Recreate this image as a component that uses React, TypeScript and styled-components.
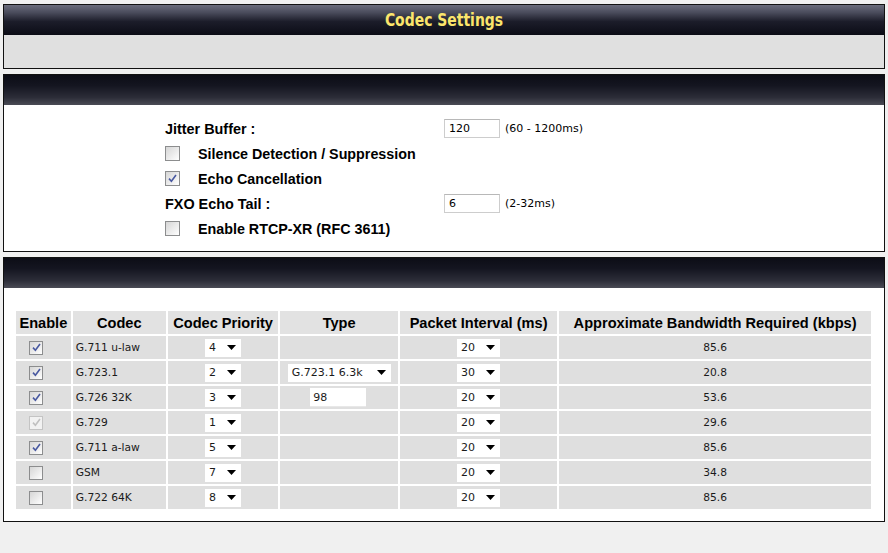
import React from 'react'
import styled, { createGlobalStyle } from 'styled-components'

const GlobalStyle = createGlobalStyle`
  html, body {
    margin: 0;
    padding: 0;
    background: #f0f0f0;
  }
  body {
    font-family: 'DejaVu Sans', Verdana, sans-serif;
    font-size: 11px;
    color: #000;
  }
`

const Page = styled.div`
  display: flex;
  flex-direction: column;
  gap: 5px;
  padding: 4px 3px 0 3px;
  width: 882px;
`

const Panel = styled.section`
  border: 1px solid #111;
  background: #fff;
  display: flex;
  flex-direction: column;
`

const TitleBar = styled.div<{ $flip?: boolean }>`
  height: 30px;
  display: flex;
  align-items: center;
  justify-content: center;
  background: ${(p) =>
    p.$flip
      ? 'linear-gradient(to bottom, #0c0d16 0%, #141520 35%, #2c2d38 75%, #4a4b55 100%)'
      : 'linear-gradient(to bottom, #6a6c7c 0%, #4a4c5c 25%, #1c1d2a 55%, #0b0c16 100%)'};
`

const Title = styled.h1`
  margin: 0;
  font-family: 'DejaVu Sans Condensed', 'Liberation Sans', sans-serif;
  font-weight: bold;
  font-size: 15.5px;
  color: #fbe56c;
  transform: scaleY(1.1);
`

const GrayBody = styled.div`
  height: 33px;
  background: #e0e0e0;
`

const FormBody = styled.div`
  display: grid;
  grid-template-columns: 279px auto;
  grid-auto-rows: 25px;
  padding: 11px 0 10px 161px;
`

const Label = styled.div`
  display: flex;
  align-items: center;
  font-family: 'Liberation Sans', Arial, sans-serif;
  font-weight: bold;
  font-size: 14.4px;
`

const CheckRow = styled.div`
  grid-column: 1 / span 2;
  display: flex;
  align-items: center;
  gap: 18px;
  font-family: 'Liberation Sans', Arial, sans-serif;
  font-weight: bold;
  font-size: 14.3px;
`

const FieldCell = styled.div`
  display: flex;
  align-items: center;
  gap: 5px;
`

const TextBox = styled.div<{ $w: number }>`
  width: ${(p) => p.$w}px;
  height: 19px;
  box-sizing: border-box;
  border: 1px solid #cdcdcd;
  border-top-color: #b8b8b8;
  background: #fff;
  padding-left: 4px;
  display: flex;
  align-items: center;
  font-size: 11px;
`

const Hint = styled.span`
  font-size: 11px;
`

const TableBody = styled.div`
  padding: 21px 11px 10px 10px;
`

const Grid = styled.table`
  border-collapse: separate;
  border-spacing: 2px;
  width: 859px;
  background: #fff;
`

const Th = styled.th<{ $w: number }>`
  width: ${(p) => p.$w}px;
  height: 23px;
  padding: 0;
  background: #e2e2e2;
  font-family: 'Liberation Sans', Arial, sans-serif;
  font-weight: bold;
  font-size: 14.6px;
  text-align: center;
  white-space: nowrap;
`

const Td = styled.td<{ $align?: string }>`
  height: 23px;
  padding: 0 3px;
  background: #dfdfdf;
  text-align: ${(p) => p.$align || 'center'};
  color: #1a1a1a;
  font-size: 10.7px;
  vertical-align: middle;
`

const CheckCell = styled.div`
  display: flex;
  align-items: center;
  padding-left: 10px;
`

const Box = styled.span<{ $size: number; $disabled?: boolean }>`
  width: ${(p) => p.$size}px;
  height: ${(p) => p.$size}px;
  box-sizing: border-box;
  border: 1px solid ${(p) => (p.$disabled ? '#c4c4c4' : '#8c8d8e')};
  background: ${(p) =>
    p.$disabled ? '#f2f2f2' : 'linear-gradient(135deg, #d6d6d6 0%, #ececec 55%, #ffffff 100%)'};
  display: inline-flex;
  align-items: center;
  justify-content: center;
  flex: none;
`

const DropBox = styled.span<{ $w: number }>`
  display: inline-flex;
  align-items: center;
  justify-content: space-between;
  width: ${(p) => p.$w}px;
  height: 18px;
  box-sizing: border-box;
  padding: 0 5px 0 4px;
  background: #fff;
  vertical-align: middle;
  font-size: 11px;
`

const TypeInput = styled.span`
  display: inline-flex;
  align-items: center;
  width: 56px;
  height: 19px;
  box-sizing: border-box;
  padding-left: 3px;
  margin-left: 27px;
  background: #fff;
  border-bottom: 1px solid #e8e8e8;
  vertical-align: middle;
  font-size: 11px;
`

const Check = ({ on, disabled, size = 14 }: { on: boolean; disabled?: boolean; size?: number }) => (
  <Box $size={size} $disabled={disabled}>
    {on && (
      <svg width="9" height="9" viewBox="0 0 9 9">
        <path
          d="M1 4.6 L3.4 7.2 L8 1"
          fill="none"
          stroke={disabled ? '#c0c0c0' : '#4858a0'}
          strokeWidth="1.6"
        />
      </svg>
    )}
  </Box>
)

const Dropdown = ({ value, w }: { value: string; w: number }) => (
  <DropBox $w={w}>
    <span>{value}</span>
    <svg width="9" height="5" viewBox="0 0 9 5">
      <path d="M0 0 H9 L4.5 5 Z" fill="#000" />
    </svg>
  </DropBox>
)

type Codec = {
  on: boolean
  disabled?: boolean
  name: string
  priority: string
  type?: 'select' | 'input'
  interval: string
  bw: string
}

const codecs: Codec[] = [
  { on: true, name: 'G.711 u-law', priority: '4', interval: '20', bw: '85.6' },
  { on: true, name: 'G.723.1', priority: '2', type: 'select', interval: '30', bw: '20.8' },
  { on: true, name: 'G.726 32K', priority: '3', type: 'input', interval: '20', bw: '53.6' },
  { on: true, disabled: true, name: 'G.729', priority: '1', interval: '20', bw: '29.6' },
  { on: true, name: 'G.711 a-law', priority: '5', interval: '20', bw: '85.6' },
  { on: false, name: 'GSM', priority: '7', interval: '20', bw: '34.8' },
  { on: false, name: 'G.722 64K', priority: '8', interval: '20', bw: '85.6' },
]

const App: React.FC = () => (
  <>
    <GlobalStyle />
    <Page>
      <Panel>
        <TitleBar>
          <Title>Codec Settings</Title>
        </TitleBar>
        <GrayBody />
      </Panel>

      <Panel>
        <TitleBar $flip />
        <FormBody>
          <Label>Jitter Buffer :</Label>
          <FieldCell>
            <TextBox $w={56}>120</TextBox>
            <Hint>(60 - 1200ms)</Hint>
          </FieldCell>
          <CheckRow>
            <Check on={false} size={15} />
            Silence Detection / Suppression
          </CheckRow>
          <CheckRow>
            <Check on size={15} />
            Echo Cancellation
          </CheckRow>
          <Label>FXO Echo Tail :</Label>
          <FieldCell>
            <TextBox $w={56}>6</TextBox>
            <Hint>(2-32ms)</Hint>
          </FieldCell>
          <CheckRow>
            <Check on={false} size={15} />
            Enable RTCP-XR (RFC 3611)
          </CheckRow>
        </FormBody>
      </Panel>

      <Panel>
        <TitleBar $flip />
        <TableBody>
          <Grid>
            <thead>
              <tr>
                <Th $w={55}>Enable</Th>
                <Th $w={95}>Codec</Th>
                <Th $w={111}>Codec Priority</Th>
                <Th $w={118}>Type</Th>
                <Th $w={158}>Packet Interval (ms)</Th>
                <Th $w={313}>Approximate Bandwidth Required (kbps)</Th>
              </tr>
            </thead>
            <tbody>
              {codecs.map((c) => (
                <tr key={c.name}>
                  <Td $align="left">
                    <CheckCell>
                      <Check on={c.on} disabled={c.disabled} />
                    </CheckCell>
                  </Td>
                  <Td $align="left">{c.name}</Td>
                  <Td>
                    <Dropdown value={c.priority} w={36} />
                  </Td>
                  <Td $align={c.type === 'input' ? 'left' : 'center'}>
                    {c.type === 'select' && <Dropdown value="G.723.1 6.3k" w={103} />}
                    {c.type === 'input' && <TypeInput>98</TypeInput>}
                  </Td>
                  <Td>
                    <Dropdown value={c.interval} w={43} />
                  </Td>
                  <Td>{c.bw}</Td>
                </tr>
              ))}
            </tbody>
          </Grid>
        </TableBody>
      </Panel>
    </Page>
  </>
)

export default App
